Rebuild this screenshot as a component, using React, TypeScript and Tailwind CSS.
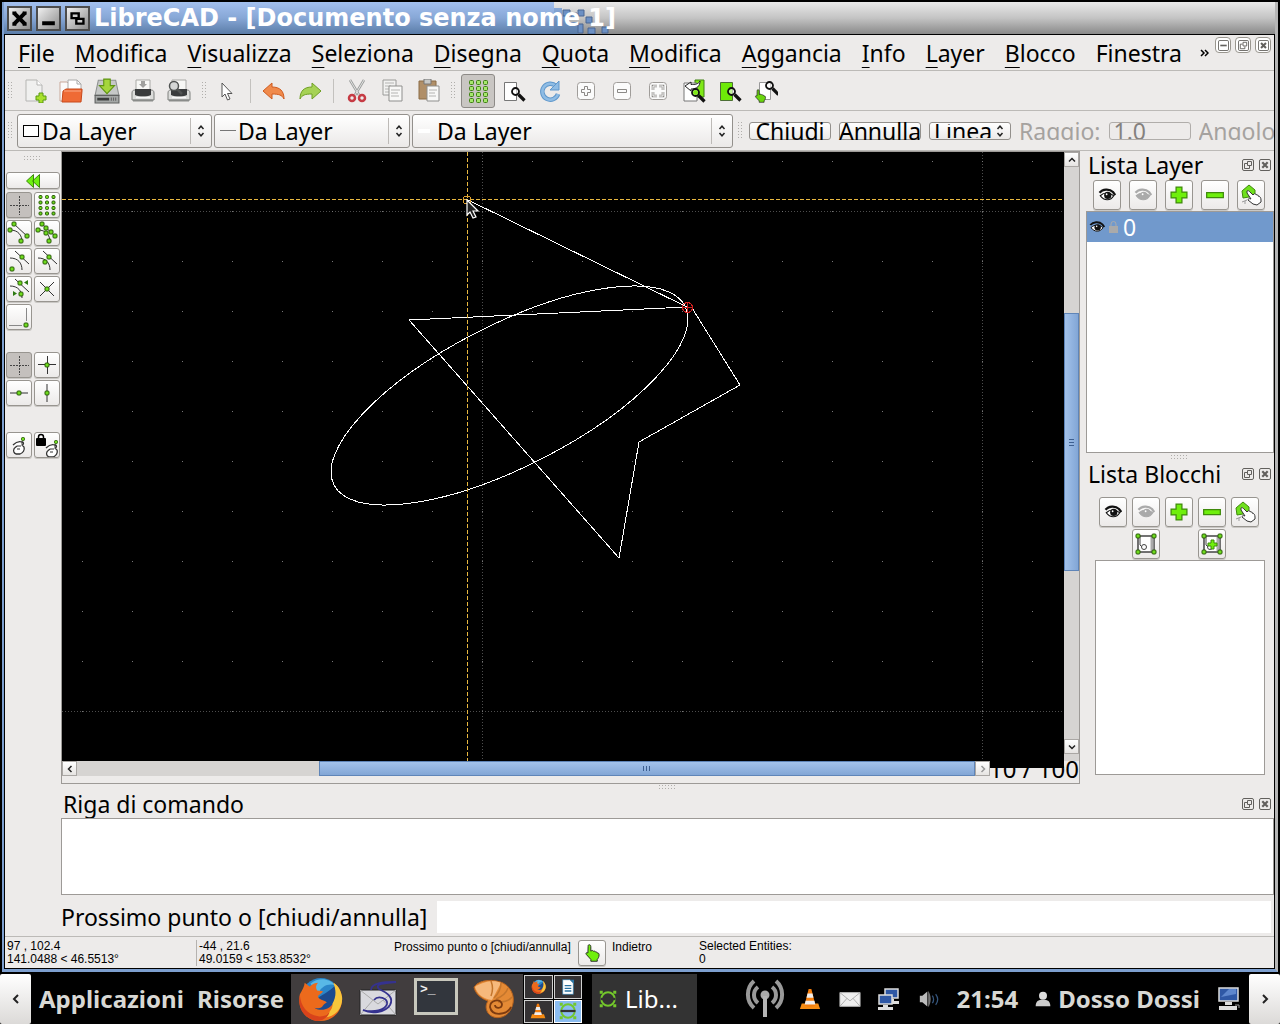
import type { ReactNode } from 'react';

const MENU = ['File', 'Modifica', 'Visualizza', 'Seleziona', 'Disegna', 'Quota', 'Modifica', 'Aggancia', 'Info', 'Layer', 'Blocco'];

const GREEN = '#6fdc1e';

/* ---------- small helpers ---------- */

function Icon({ size = 24, box = 24, children }: { size?: number; box?: number; children: ReactNode }) {
  return (
    <svg width={size} height={size} viewBox={`0 0 ${box} ${box}`} fill="none" className="shrink-0" aria-hidden="true">
      {children}
    </svg>
  );
}

function Handle({ className = '' }: { className?: string }) {
  return (
    <svg width="6" height="18" className={`shrink-0 ${className}`} aria-hidden="true">
      {[0, 3, 6, 9, 12, 15].map((y) => (
        <g key={y} fill="#b0aeab">
          <rect x="0" y={y} width="1" height="1" />
          <rect x="3" y={y} width="1" height="1" />
        </g>
      ))}
    </svg>
  );
}

function HandleFlat() {
  return (
    <svg width="18" height="5" className="mx-auto block shrink-0" aria-hidden="true">
      {[0, 3, 6, 9, 12, 15].map((x) => (
        <g key={x} fill="#b0aeab">
          <rect x={x} y="0" width="1" height="1" />
          <rect x={x} y="3" width="1" height="1" />
        </g>
      ))}
    </svg>
  );
}

function Dot({ x, y, r = 2 }: { x: number; y: number; r?: number }) {
  return <rect x={x - r} y={y - r} width={r * 2} height={r * 2} rx="1" fill={GREEN} stroke="#2b5a0a" />;
}

function ToolButton({ label, children }: { label: string; children: ReactNode }) {
  return (
    <button aria-label={label} className="flex h-9 w-9 shrink-0 items-center justify-center">
      {children}
    </button>
  );
}

function PadButton({ label, active = false, className = 'size-[26px]', children }: { label: string; active?: boolean; className?: string; children: ReactNode }) {
  return (
    <button
      aria-label={label}
      className={`flex shrink-0 items-center justify-center rounded-[3px] border border-[#989590] shadow-[0_1px_0_#c9c7c4] ${
        active ? 'bg-[#c4c0bd]' : 'bg-linear-to-b from-white to-[#eceae9]'
      } ${className}`}
    >
      {children}
    </button>
  );
}

function UpDown() {
  return (
    <svg width="8" height="12" viewBox="0 0 8 12" fill="none" stroke="#222" strokeWidth="1.5" className="shrink-0" aria-hidden="true">
      <path d="M1.5 4 4 1.2 6.5 4M1.5 8 4 10.8 6.5 8" />
    </svg>
  );
}

function Combo({ label, swatch, className }: { label: string; swatch: ReactNode; className: string }) {
  return (
    <div className={`flex h-[34px] shrink-0 items-center rounded-[3px] border border-[#93908c] bg-linear-to-b from-white to-[#ebe9e8] pl-[5px] ${className}`}>
      {swatch}
      <select aria-label={label} className="h-8 min-w-0 flex-1 appearance-none bg-transparent leading-8 outline-none">
        <option>Da Layer</option>
      </select>
      <span className="h-[26px] w-px bg-[#bdbab7]" />
      <span className="flex w-5 justify-center">
        <UpDown />
      </span>
    </div>
  );
}

function DockButton({ kind, size = 12 }: { kind: 'float' | 'close' | 'min'; size?: number }) {
  return (
    <button aria-label={kind} className="flex shrink-0 items-center justify-center">
      <svg width={size} height={size} viewBox="0 0 12 12" fill="none" stroke="#62605d" aria-hidden="true">
        <rect x="0.5" y="0.5" width="11" height="11" rx="1.5" />
        {kind === 'float' && <path d="M5.5 2.5h4v4h-4zM5 4.5H2.5v5h5V7" />}
        {kind === 'close' && <path d="m3.3 3.3 5.4 5.4m0-5.4L3.3 8.7" strokeWidth="2.2" />}
        {kind === 'min' && <path d="M2.5 6h7" strokeWidth="1.8" />}
      </svg>
    </button>
  );
}

function MdiButton({ kind }: { kind: 'float' | 'close' | 'min' }) {
  return (
    <span className="flex size-4 items-center justify-center rounded-[4px] border border-[#99968f] bg-white">
      <DockButton kind={kind} size={11} />
    </span>
  );
}

/* ---------- toolbar icons ---------- */

function Magnifier({ x, y }: { x: number; y: number }) {
  return (
    <g transform={`translate(${x} ${y})`}>
      <circle cx="4.5" cy="4.5" r="3.5" fill="#fff" fillOpacity="0.6" stroke="#111" strokeWidth="1.8" />
      <path d="m7.5 7.5 6 6" stroke="#111" strokeWidth="3.2" />
    </g>
  );
}

function Printer() {
  return (
    <g>
      <path d="M5 1h14v12H5z" fill="#f7f7f5" stroke="#a9a9a6" />
      <path d="M1 14c0-2 1-3 3-3h16c2 0 3 1 3 3v7H1z" fill="#dcdddb" stroke="#7f817f" />
      <path d="M4 10h16v6c-5 2-11 2-16 0z" fill="#3a3c3d" />
      <path d="M5 18.500h14" stroke="#f8f8f8" strokeWidth="1.500" />
      <path d="M2 21.500h20" stroke="#8a8c8a" strokeWidth="2" />
    </g>
  );
}

function Floppy() {
  return (
    <Icon size={26}>
      <path d="M4 2h16l3 14H1z" fill="#c6c8c7" stroke="#8d908f" />
      <path d="M1 16h22v7H1z" fill="#a4a7a6" stroke="#5e605f" />
      <path d="M3 19.500h11" stroke="#3c3e3d" strokeWidth="2.500" />
      <path d="M16 18v3M18 18v3M20 18v3" stroke="#666" />
      <path d="M9 1h6v6h4l-7 7.500L5 7h4z" fill="#a5d63c" stroke="#5f9412" />
    </Icon>
  );
}

function Hand({ x, y, fill = '#fff', s = 1 }: { x: number; y: number; fill?: string; s?: number }) {
  return (
    <path
      transform={`translate(${x} ${y}) scale(${s})`}
      d="M4 1c1.5 0 2 .8 2 2v5l1-.6c1-.4 1.6 0 2 .8 1-.5 1.8-.2 2.2.7 1-.3 1.8.3 2 1.2 1.200-.1 1.800.5 1.800 1.600 0 3-1 4-2 5.300v2H6v-2L1 11.500C0 10 1.500 9 2.800 10L3 3c0-1.200.2-2 1-2z"
      fill={fill}
      stroke="#222"
    />
  );
}

function SnapHand({ x, y }: { x: number; y: number }) {
  return (
    <g transform={`translate(${x} ${y})`}>
      <path d="M1 4c3-3 6-4 9-3 2 0 2 2 0 3l2 2c1 3-1 6-4 7H4c-2-1-3-3-2-5 0-1 2-2 3-3" fill="#fff" stroke="#333" strokeWidth="1.300" />
      <path d="M5 5h4M5 8h3M10 3V0" stroke="#333" />
      <Dot x={11} y={-2} r={1.5} />
    </g>
  );
}

function FileToolbar() {
  return (
    <div className="flex h-10 items-center overflow-hidden border-b border-[#bcbab7]" role="toolbar">
      <div className="flex w-3 shrink-0 justify-center"><Handle /></div>
      <ToolButton label="Nuovo">
        <Icon>
          <path d="M3 1h11l5 5v16H3z" fill="#f0f0ef" stroke="#b5b5b3" />
          <path d="M14 1v5h5" fill="#fff" stroke="#b5b5b3" />
          <path d="M16 14h4v3h3v4h-3v3h-4v-3h-3v-4h3z" fill="#a8e02c" stroke="#5a9a10" />
        </Icon>
      </ToolButton>
      <ToolButton label="Apri">
        <Icon>
          <path d="M1 3h7l2 2v17H1z" fill="#fafafa" stroke="#c9a89b" />
          <path d="M9 1h9l4 4v8H9z" fill="#fff" stroke="#aaa" />
          <path d="M18 1v4h4" stroke="#aaa" />
          <path d="M4 12l3-2h16v2l-1 11H3z" fill="#ef6a35" stroke="#c8481b" />
          <path d="M5 12h17" stroke="#f9a988" />
        </Icon>
      </ToolButton>
      <ToolButton label="Salva"><Floppy /></ToolButton>
      <ToolButton label="Stampa">
        <Icon>
          <Printer />
          <path d="M10 2h4v3h2l-4 4-4-4h2z" fill="#a0a09e" />
        </Icon>
      </ToolButton>
      <ToolButton label="Anteprima">
        <Icon>
          <Printer />
          <circle cx="7" cy="7" r="4.500" fill="#d4d6d5" stroke="#505352" strokeWidth="1.500" />
          <path d="m10 10 5 5" stroke="#505352" strokeWidth="2.500" />
        </Icon>
      </ToolButton>
      <div className="flex w-[11px] shrink-0 justify-end"><Handle /></div>
      <ToolButton label="Selezione">
        <Icon>
          <path d="M8 4v14l3-3 2.500 6 2.500-1-2.500-5.500H18z" fill="#fff" stroke="#555" />
        </Icon>
      </ToolButton>
      <div className="flex w-3 shrink-0 justify-center"><span className="h-6 w-px bg-[#c3c1be]" /></div>
      <ToolButton label="Annulla modifica">
        <Icon>
          <path d="M1 12 10 4v4c8 0 12 4 12 12-2-4-5-5-12-5v5z" fill="#f08a4c" stroke="#cf5b1f" strokeLinejoin="round" />
        </Icon>
      </ToolButton>
      <ToolButton label="Ripeti">
        <Icon>
          <path d="M23 12 14 4v4C6 8 2 12 2 20c2-4 5-5 12-5v5z" fill="#a6d255" stroke="#6f9f25" strokeLinejoin="round" />
        </Icon>
      </ToolButton>
      <div className="flex w-[11px] shrink-0 justify-center"><span className="h-6 w-px bg-[#c3c1be]" /></div>
      <ToolButton label="Taglia">
        <Icon>
          <path d="M5 1l9 15M19 1l-9 15" stroke="#9b9d9c" strokeWidth="2.500" />
          <path d="M5 1l9 15M19 1l-9 15" stroke="#e2e3e2" />
          <circle cx="7" cy="19" r="3" stroke="#c63b44" strokeWidth="2.500" />
          <circle cx="17" cy="19" r="3" stroke="#c63b44" strokeWidth="2.500" />
        </Icon>
      </ToolButton>
      <ToolButton label="Copia">
        <Icon>
          <path d="M2 1h13v15H2z" fill="#f2f2f1" stroke="#9a9a98" />
          <path d="M4 4h9M4 7h6M4 10h4M4 13h4" stroke="#b4b4b2" />
          <path d="M8 7h13v15H8z" fill="#f8f8f7" stroke="#8f8f8d" />
          <path d="M10 11h9M10 14h7M10 17h8" stroke="#b4b4b2" />
        </Icon>
      </ToolButton>
      <ToolButton label="Incolla">
        <Icon>
          <path d="M2 2h17v18H2z" fill="#b08f68" stroke="#8b6c47" />
          <path d="M7 0h7v5H7z" fill="#c7c8c6" stroke="#777" />
          <path d="M10 7h12v15H10z" fill="#f8f8f7" stroke="#8f8f8d" />
          <path d="M12 11h8M12 14h6M12 17h7" stroke="#b4b4b2" />
        </Icon>
      </ToolButton>
      <div className="flex w-[13px] shrink-0 justify-center"><Handle /></div>
      <button aria-label="Griglia" className="mx-px flex size-[34px] shrink-0 items-center justify-center rounded-[3px] border border-[#8d8a87] bg-[#c9c6c3]">
        <Icon>
          {[4, 11, 18].map((x) => [3, 9, 15, 21].map((y) => <rect key={`${x}-${y}`} x={x - 0.5} y={y - 1.5} width="4" height="4" rx="1" fill="#a5e86c" stroke="#3f8013" />))}
        </Icon>
      </button>
      <ToolButton label="Ridisegna">
        <Icon>
          <path d="M2.500 3.500h12v18h-12z" fill="#fff" stroke="#777" />
          <Magnifier x={9} y={8} />
        </Icon>
      </ToolButton>
      <ToolButton label="Aggiorna">
        <Icon>
          <path d="M18 7A8 8 0 1 0 20 15" stroke="#5f97cb" strokeWidth="4.500" />
          <path d="M18 7A8 8 0 1 0 20 15" stroke="#8fbce4" strokeWidth="2.500" />
          <path d="M21 2v9h-9z" fill="#8fbce4" stroke="#5f97cb" />
        </Icon>
      </ToolButton>
      <ToolButton label="Ingrandisci">
        <Icon>
          <rect x="3.500" y="3.500" width="17" height="17" rx="3" fill="#fbfbfb" stroke="#a09d9a" />
          <path d="M10.500 7.500h3v3h3v3h-3v3h-3v-3h-3v-3h3z" stroke="#8b8986" />
        </Icon>
      </ToolButton>
      <ToolButton label="Riduci">
        <Icon>
          <rect x="3.500" y="3.500" width="17" height="17" rx="3" fill="#fbfbfb" stroke="#a09d9a" />
          <path d="M7.500 10.500h9v3h-9z" stroke="#8b8986" />
        </Icon>
      </ToolButton>
      <ToolButton label="Zoom automatico">
        <Icon>
          <rect x="3.500" y="3.500" width="17" height="17" rx="3" fill="#fbfbfb" stroke="#a09d9a" />
          <path d="M7 11V7h4M13 7h4v4M17 13v4h-4M11 17H7v-4" stroke="#8b8986" strokeWidth="2.600" />
          <path d="M7 11V7h4M13 7h4v4M17 13v4h-4M11 17H7v-4" stroke="#fff" />
        </Icon>
      </ToolButton>
      <ToolButton label="Vista precedente">
        <Icon>
          <path d="M13 1h9v17h-9z" fill="#7fe817" stroke="#3f8013" />
          <path d="M2 4h13v18H2z" fill="#fff" stroke="#777" />
          <path d="M3 7 9 3v2.500c4 0 7 0 9-3.500 0 5-3 8-9 8V12z" fill="#fff" stroke="#222" />
          <Magnifier x={9} y={9} />
          <circle cx="13.500" cy="13.500" r="2.500" fill="#7fe817" />
        </Icon>
      </ToolButton>
      <ToolButton label="Zoom finestra">
        <Icon>
          <path d="M2.500 3.500h12v18h-12z" fill="#6eea08" stroke="#4c6e35" />
          <Magnifier x={9} y={8} />
        </Icon>
      </ToolButton>
      <ToolButton label="Panoramica">
        <Icon>
          <path d="M5.500 3.500h11v17h-11z" fill="#fff" stroke="#999" />
          <Magnifier x={11} y={2} />
          <Hand x={1} y={10} s={0.7} fill="#6ad50e" />
        </Icon>
      </ToolButton>
    </div>
  );
}

function PropertyToolbar() {
  return (
    <div className="flex h-10 items-center overflow-hidden border-b border-[#bcbab7]" role="toolbar">
      <div className="flex w-3 shrink-0 justify-center"><Handle /></div>
      <Combo label="Colore" className="w-[195px]" swatch={<span className="mr-[3px] h-3 w-4 border border-black bg-white" />} />
      <Combo label="Spessore" className="ml-[2px] w-[196px]" swatch={<span className="mr-[2px] h-px w-4 bg-[#777]" />} />
      <Combo label="Tipo di linea" className="ml-[2px] w-[321px]" swatch={<span className="mr-[7px] h-1 w-3 bg-white" />} />
      <div className="flex w-4 shrink-0 justify-center"><Handle /></div>
      <div className="flex min-w-0 items-center gap-2">
        <button className="flex h-[18px] w-[82px] shrink-0 items-center justify-center rounded-[3px] border border-[#93908c] bg-linear-to-b from-white to-[#ebe9e8] leading-[16px]">Chiudi</button>
        <button className="flex h-[18px] w-[82px] shrink-0 items-center justify-center rounded-[3px] border border-[#93908c] bg-linear-to-b from-white to-[#ebe9e8] leading-[16px]">Annulla</button>
        <div className="flex h-[18px] w-[82px] shrink-0 items-center rounded-[3px] border border-[#93908c] bg-linear-to-b from-white to-[#ebe9e8] py-px pr-[6px] pl-1">
          <select aria-label="Tipo" className="h-[14px] min-w-0 flex-1 appearance-none overflow-hidden bg-transparent leading-[14px] outline-none">
            <option>Linea</option>
          </select>
          <UpDown />
        </div>
        <label htmlFor="raggio" className="h-[18px] shrink-0 overflow-hidden leading-[18px] text-[#a5a29f]">Raggio:</label>
        <input id="raggio" disabled defaultValue="1.0" className="h-[18px] w-[82px] shrink-0 rounded-[3px] border border-[#b0adaa] bg-[#edebea] pl-1 text-[#84817e]" />
        <span className="h-[18px] overflow-hidden leading-[18px] text-[#a5a29f]">Angolo</span>
      </div>
    </div>
  );
}

/* ---------- left palette ---------- */

const line = { stroke: '#333', strokeWidth: 1 };

function Palette() {
  return (
    <div className="flex w-14 shrink-0 flex-col px-px pt-[5px]">
      <HandleFlat />
      <PadButton label="Indietro" className="mt-[11px] h-[17px] w-[54px]">
        <svg width="16" height="14" aria-hidden="true">
          <path d="M8.500.5v13L1.500 7zM14.500.5v13L7.500 7z" fill="#6ff011" stroke="#3b8a0a" />
        </svg>
      </PadButton>
      <div className="mt-[3px] grid grid-cols-[26px_26px] gap-[2px]">
        <PadButton label="Snap libero" active>
          <Icon><path d="M12.500 3v19M3 12.500h19" stroke="#444" strokeDasharray="2 1" /></Icon>
        </PadButton>
        <PadButton label="Snap griglia">
          <Icon>{[5.5, 12, 18.5].map((x) => [4, 9.5, 15, 20.5].map((y) => <Dot key={`${x}-${y}`} x={x} y={y} r={1.5} />))}</Icon>
        </PadButton>
        <PadButton label="Snap estremi">
          <Icon><path d="M7 3l14 13M3 9c8 0 12 5 12 12" {...line} /><Dot x={7} y={3} /><Dot x={20} y={15} /><Dot x={3} y={9} /><Dot x={14} y={20} /></Icon>
        </PadButton>
        <PadButton label="Snap entità">
          <Icon><path d="M7 3l14 13M3 9c8 0 12 5 12 12" {...line} /><Dot x={7} y={3} /><Dot x={20} y={15} /><Dot x={3} y={9} /><Dot x={14} y={20} /><Dot x={11} y={7} /><Dot x={16} y={11} /><Dot x={11} y={12} /></Icon>
        </PadButton>
        <PadButton label="Snap centro">
          <Icon><path d="M8 2l14 13M3 9c8 0 12 5 12 12" {...line} /><Dot x={15} y={8} /><Dot x={5} y={20} /></Icon>
        </PadButton>
        <PadButton label="Snap medio">
          <Icon><path d="M8 2l14 13M3 9c8 0 12 5 12 12" {...line} /><Dot x={14} y={8} /><Dot x={10} y={13} /></Icon>
        </PadButton>
        <PadButton label="Snap distanza">
          <Icon><path d="M8 2l14 13M3 9c8 0 12 5 12 12" {...line} /><Dot x={13} y={6} /><Dot x={14} y={17} /><path d="M21 3v5l-4-2.500zM6 14v5l4-2.500z" fill="#2d7a12" /></Icon>
        </PadButton>
        <PadButton label="Snap intersezione">
          <Icon><path d="M5 5l14 14M19 5L5 19" {...line} /><Dot x={12} y={12} /></Icon>
        </PadButton>
        <PadButton label="Snap angolo">
          <Icon><path d="M19.500 3v13M2 20.500h13" stroke="#888" /><Dot x={19} y={20} /></Icon>
        </PadButton>
      </div>
      <div className="mt-[22px] grid grid-cols-[26px_26px] gap-[2px]">
        <PadButton label="Nessuna restrizione" active>
          <Icon><path d="M12.500 3v19M3 12.500h19" stroke="#444" strokeDasharray="2 1" /></Icon>
        </PadButton>
        <PadButton label="Restrizione ortogonale">
          <Icon><path d="M12.500 3v18M3 11.500h18" {...line} /><Dot x={12} y={12} /></Icon>
        </PadButton>
        <PadButton label="Restrizione orizzontale">
          <Icon><path d="M3 12h18" {...line} /><Dot x={12} y={12} /></Icon>
        </PadButton>
        <PadButton label="Restrizione verticale">
          <Icon><path d="M12 3v18" {...line} /><Dot x={12} y={12} /></Icon>
        </PadButton>
      </div>
      <div className="mt-[26px] grid grid-cols-[26px_26px] gap-[2px]">
        <PadButton label="Zero relativo">
          <Icon><SnapHand x={5} y={8} /></Icon>
        </PadButton>
        <PadButton label="Blocca zero relativo">
          <Icon>
            <SnapHand x={10} y={11} />
            <rect x="1" y="5" width="10" height="8" rx="1" fill="#000" />
            <path d="M3.500 6V4a2.500 2.500 0 0 1 5 0v2" stroke="#000" strokeWidth="1.500" />
          </Icon>
        </PadButton>
      </div>
    </div>
  );
}

/* ---------- drawing view ---------- */

function Drawing() {
  return (
    <svg width="100%" height="100%" className="absolute inset-0" shapeRendering="crispEdges" aria-label="Disegno">
      <defs>
        <pattern id="dots" x="20" y="9" width="50" height="50" patternUnits="userSpaceOnUse">
          <rect width="1" height="1" fill="#777" />
        </pattern>
      </defs>
      <rect width="100%" height="100%" fill="#000" />
      <g stroke="#4d4d4d" strokeDasharray="1 2">
        <path d="M420.500 0v2000M920.500 0v2000M0 59.500h3000M0 559.500h3000" />
      </g>
      <rect width="100%" height="100%" fill="url(#dots)" />
      <g stroke="#fff" fill="none">
        <ellipse cx="447.500" cy="243.500" rx="197" ry="71" transform="rotate(-27 447.500 243.500)" />
        <path d="M406 48 625 155 347 168 557 406 577 290 678 233 630 156" />
      </g>
      <g stroke="#e8b840" strokeDasharray="4 2" fill="none">
        <path d="M405.500 0v2000M0 47.500h3000" />
      </g>
      <circle cx="405" cy="48" r="4" stroke="#dfa030" fill="none" />
      <g stroke="#d02020" fill="none">
        <circle cx="625.500" cy="155.500" r="5" />
        <path d="M620 155.500h11M625.500 150v11" />
      </g>
      <path d="M405 48v15l3-3 3 6 3-1-3-6h5z" fill="#222" stroke="#fff" strokeWidth="1.200" shapeRendering="auto" />
    </svg>
  );
}

function Arrow({ d, dim = false }: { d: string; dim?: boolean }) {
  return (
    <button aria-label="Scorri" className="flex size-[15px] shrink-0 items-center justify-center border border-[#aaa7a4] bg-linear-to-b from-white to-[#e6e4e2]">
      <svg width="8" height="8" fill="none" stroke={dim ? '#999' : '#222'} strokeWidth="1.500" aria-hidden="true"><path d={d} /></svg>
    </button>
  );
}

function CanvasPane() {
  return (
    <div className="flex min-w-0 flex-1 flex-col border border-[#9d9a97]">
      <div className="flex min-h-0 flex-1">
        <div className="relative flex-1 bg-black">
          <Drawing />
        </div>
        <div className="flex w-[15px] flex-col bg-[#d6d4d2] pb-[7px]">
          <Arrow d="M1 5.500 4 2.500l3 3" />
          <div className="grow-[148]" />
          <div className="flex grow-[253] flex-col items-center justify-center gap-[2px] border border-[#5f85b8] bg-linear-to-r from-[#a3c2ea] to-[#82a6d6]">
            {[0, 1, 2].map((i) => <span key={i} className="h-px w-[5px] bg-[#3d5f90]" />)}
          </div>
          <div className="grow-[170]" />
          <Arrow d="M1 2.500 4 5.500l3-3" />
        </div>
      </div>
      <div className="flex h-[22px]">
        <div className="flex h-[15px] min-w-0 flex-1 bg-[#d6d4d2]">
          <Arrow d="M5.500 1 2.500 4l3 3" />
          <div className="grow-[244]" />
          <div className="flex grow-[654] items-center justify-center gap-[2px] border border-[#5f85b8] bg-linear-to-b from-[#a3c2ea] to-[#82a6d6]">
            {[0, 1, 2].map((i) => <span key={i} className="h-[5px] w-px bg-[#3d5f90]" />)}
          </div>
          <Arrow dim d="M2.500 1 5.500 4l-3 3" />
        </div>
        <div className="relative flex h-[22px] w-[89px] items-center justify-end overflow-hidden pb-[6px] text-[24px] leading-[22px] whitespace-nowrap">
          10 / 100
          <span className="absolute top-0 left-0 h-[7px] w-[74px] bg-black" />
        </div>
      </div>
    </div>
  );
}

/* ---------- right docks ---------- */

function Eye({ fill = '#111', size = 18 }: { fill?: string; size?: number }) {
  return (
    <Icon size={size}>
      <path d="M2 9c4-5 13-6 18-1l3 4" stroke={fill} strokeWidth="3" />
      <path d="M3 13c5-5 12-5 18 0-4 7-13 7-18 0z" fill={fill === '#111' ? '#fff' : fill} stroke={fill} strokeWidth="1.500" />
      <circle cx="13" cy="12.500" r="4.800" fill={fill} />
      <circle cx="11.500" cy="11" r="1.200" fill="#fff" />
    </Icon>
  );
}

function Plus() {
  return <Icon size={20}><path d="M8.500 2.500h7v6h6v7h-6v6h-7v-6h-6v-7h6z" fill="#6fef0c" stroke="#3f8a0b" strokeWidth="1.500" /></Icon>;
}

function Minus() {
  return <Icon size={20}><path d="M2 9h20v6H2z" fill="#6fef0c" stroke="#3f8a0b" strokeWidth="1.500" /></Icon>;
}

function EditHand() {
  return (
    <Icon>
      <path d="M3 8 10 2l6 5v6L4 15z" fill="#6fe01c" stroke="#3f8a0b" />
      <path d="M8 8c1-1 2 0 3 1l3 3 1-1c1-1 2 0 2 1 1-1 2 0 2 1 2 0 3 2 3 4v2l-4 3-4-1-5-4c0-1 1-2 3-1l-4-6z" fill="#fff" stroke="#333" />
      <path d="M3 19l5-2M6 21v-3" stroke="#999" />
    </Icon>
  );
}

function BlockIcon({ plus = false }: { plus?: boolean }) {
  return (
    <Icon>
      <path d="M4 4h16v16H4z" fill="#fff" stroke="#444" strokeWidth="1.500" />
      <path d="M18 5v14" stroke="#aaa" strokeWidth="3" />
      <path d="M6 4v9l4 4" stroke="#444" />
      <circle cx="10" cy="15" r="2.500" fill="#fff" stroke="#444" />
      {plus && <path d="M11 8h3v3h3v3h-3v3h-3v-3H8v-3h3z" fill="#6fef0c" stroke="#3f8a0b" />}
      <Dot x={4} y={4} /><Dot x={20} y={4} /><Dot x={4} y={20} /><Dot x={20} y={20} />
    </Icon>
  );
}

function DockTitle({ children }: { children: ReactNode }) {
  return (
    <div className="flex h-[28px] shrink-0 items-center gap-[5px] pr-[3px] pl-[2px]">
      <h2 className="flex-1">{children}</h2>
      <DockButton kind="float" />
      <DockButton kind="close" />
    </div>
  );
}

function DockTools({ name }: { name: string }) {
  return (
    <>
      <PadButton label={`Mostra ${name}`} className="h-[30px] w-7"><Eye /></PadButton>
      <PadButton label={`Nascondi ${name}`} className="h-[30px] w-7"><Eye fill="#aaa" /></PadButton>
      <PadButton label={`Aggiungi ${name}`} className="h-[30px] w-7"><Plus /></PadButton>
      <PadButton label={`Rimuovi ${name}`} className="h-[30px] w-7"><Minus /></PadButton>
      <PadButton label={`Modifica ${name}`} className="h-[30px] w-7"><EditHand /></PadButton>
    </>
  );
}

function Docks() {
  return (
    <aside className="flex w-[194px] shrink-0 flex-col pl-[6px]">
      <DockTitle>Lista Layer</DockTitle>
      <div className="flex gap-2 pt-px pb-px pl-[7px]"><DockTools name="layer" /></div>
      <div className="h-[242px] border border-[#9d9a97] bg-white">
        <div className="flex h-[30px] items-center bg-[#7199cc] pl-[2px] text-white">
          <Eye size={16} />
          <svg width="10" height="12" className="ml-1" aria-hidden="true">
            <rect x="0" y="5" width="9" height="7" fill="#aaa" />
            <path d="M2 5V3a2.500 2.500 0 0 1 5 0v2" fill="none" stroke="#aaa" />
          </svg>
          <span className="ml-1">0</span>
        </div>
      </div>
      <div className="pt-[2px]"><HandleFlat /></div>
      <DockTitle>Lista Blocchi</DockTitle>
      <div className="mt-[9px] grid grid-cols-[repeat(5,28px)] justify-center gap-x-[5px] gap-y-[2px] pr-[2px]">
        <DockTools name="blocco" />
        <PadButton label="Modifica attributi blocco" className="col-start-2 h-[30px] w-7"><BlockIcon /></PadButton>
        <PadButton label="Inserisci blocco" className="col-start-4 h-[30px] w-7"><BlockIcon plus /></PadButton>
      </div>
      <div className="mt-px mr-[9px] mb-[9px] ml-[9px] flex-1 border border-[#9d9a97] bg-white" />
    </aside>
  );
}

/* ---------- window chrome ---------- */

function TitleButton({ label, children }: { label: string; children: ReactNode }) {
  return (
    <button aria-label={label} className="relative flex size-[25px] items-center justify-center border-2 border-[#4c4c4c] bg-linear-to-br from-[#f0f0f0] to-[#8e8e8e]">
      <Icon size={19}>{children}</Icon>
    </button>
  );
}

function TitleBar() {
  return (
    <header className="relative flex h-8 shrink-0 items-center gap-1 bg-linear-to-b from-[#e9e9e9] via-[#c4c4c4] to-[#8a8a8a] pl-[3px]">
      <div className="absolute inset-y-0 left-0 flex">
        <div className="w-[550px] bg-linear-to-b from-[#a3c0ee] via-[#87a7d6] to-[#5b7da8]" />
        <svg width="64" height="32" aria-hidden="true">
          <defs>
            <linearGradient id="edge" x1="0" y1="0" x2="0" y2="1">
              <stop offset="0" stopColor="#87a7d6" />
              <stop offset="1" stopColor="#5b7da8" />
            </linearGradient>
          </defs>
          <path d="M0 6h8v8h8v6h8v12H0z" fill="url(#edge)" />
          <g fill="#6c90c4" stroke="#4a6692">
            <path d="M9 8h7v6H9zM17 11h6v5h-6zM24 8h6v6h-6zM24 22h5v9h-5zM32 15h6v6h-6zM34 26h7v6h-7zM48 25h6v6h-6z" />
          </g>
        </svg>
      </div>
      <TitleButton label="Chiudi finestra">
        <path d="m5 5 14 14M19 5 5 19" stroke="#000" strokeWidth="5" />
        <path d="M3 3h5v4H3zM16 3h5v4h-5zM3 17h5v4H3zM16 17h5v4h-5z" fill="#000" />
      </TitleButton>
      <TitleButton label="Riduci a icona"><path d="M4 18h16" stroke="#000" strokeWidth="5" /></TitleButton>
      <TitleButton label="Ripristina"><path d="M4.500 5.500h9v6h-9zM10.500 12.500h9v6h-9z" fill="#ccc" stroke="#000" strokeWidth="3" /></TitleButton>
      <h1 className="relative font-['DejaVu_Sans',sans-serif] text-[24px] leading-[28px] font-bold whitespace-nowrap text-white">
        LibreCAD - [Documento senza nome 1]
      </h1>
    </header>
  );
}

function MenuBar() {
  return (
    <nav className="flex h-9 items-center overflow-hidden border-b border-[#bcbab7] pr-[3px] pl-[13px]">
      <div className="flex min-w-0 flex-1 gap-[20px] whitespace-nowrap">
        {MENU.map((m, i) => (
          <button key={i}>
            <span className="underline decoration-1 underline-offset-[5px]">{m[0]}</span>
            {m.slice(1)}
          </button>
        ))}
        <button>Finestra</button>
      </div>
      <button aria-label="Altro" className="mx-[6px]">
        <svg width="9" height="8" fill="none" stroke="#000" strokeWidth="1.500" aria-hidden="true"><path d="m1 1 3 3-3 3m4-6 3 3-3 3" /></svg>
      </button>
      <div className="mb-[15px] flex gap-1">
        <MdiButton kind="min" />
        <MdiButton kind="float" />
        <MdiButton kind="close" />
      </div>
    </nav>
  );
}

function StatusBar() {
  return (
    <footer className="flex h-8 shrink-0 items-start border-t border-[#bcbab7] pt-[3px] font-['Liberation_Sans',sans-serif] text-[12px] leading-[13px] whitespace-nowrap">
      <p className="w-[191px] pl-[2px]">97 , 102.4<br />141.0488 &lt; 46.5513°</p>
      <p className="w-[189px] border-l border-[#b5b2af] pl-[2px]">-44 , 21.6<br />49.0159 &lt; 153.8532°</p>
      <p className="w-[193px] pt-px pl-[9px]">Prossimo punto o [chiudi/annulla]</p>
      <PadButton label="Mouse" className="h-[26px] w-7"><Icon size={20}><Hand x={4} y={1} s={1.1} fill="#6fef0c" /></Icon></PadButton>
      <p className="w-[93px] pt-px pl-[6px]">Indietro</p>
      <p>Selected Entities:<br />0</p>
    </footer>
  );
}

/* ---------- desktop panel ---------- */

function Firefox({ size }: { size: number }) {
  return (
    <Icon size={size} box={48}>
      <circle cx="25" cy="22" r="20" fill="#2a85c8" />
      <path d="M14 8c8-7 20-6 26 2-6-3-16 1-17 8z" fill="#58b8e6" />
      <path d="M20 24c6-4 14-8 20-14 7 6 9 18 3 26-5 8-18 12-27 7z" fill="#1c4b8f" />
      <path d="M38 7c4 8 4 14 0 21-4 8-14 9-20 5 10 3 8-4 13-5-1-3-7-2-9-6 0-3 4-3 5-6l-6-1c-2-3-1-6 1-8-5 0-7 3-9 4l-5-4c0 4-3 8-5 12C0 33 8 47 24 47s24-13 23-25C46 15 43 10 38 7z" fill="#ec6a1c" />
      <path d="M38 7c3 8 3 15-1 22 1 4-4 12-11 14 15 1 22-11 21-21C46 15 43 10 38 7z" fill="#f8c63b" />
      <path d="M3 20c1 11 7 20 19 22 6 1 10-2 12-5-1 6-7 10-14 10C8 44 0 34 3 20z" fill="#d8431b" />
    </Icon>
  );
}

function Cone({ size }: { size: number }) {
  return (
    <Icon size={size}>
      <path d="M3 17h18l2 6H1z" fill="#f58b12" />
      <path d="M10.500 1h3l4.500 18c-4 2-8 2-12 0z" fill="#f47d0d" />
      <path d="M9.300 6h5.400l1.100 4.500H8.200zM7.200 14h9.600l1 4H6.200z" fill="#eee" />
    </Icon>
  );
}

function CadLogo({ size }: { size: number }) {
  return (
    <Icon size={size}>
      <circle cx="12" cy="12" r="9" stroke="#74c82c" strokeWidth="2.500" />
      <path d="M2 12h20" stroke="#333" strokeWidth="3" />
      <path d="M1 1h4v4H1zM19 1h4v4h-4zM1 19h4v4H1zM19 19h4v4h-4z" fill="#74c82c" />
    </Icon>
  );
}

function Computer({ x = 0, y = 0 }: { x?: number; y?: number }) {
  return (
    <g transform={`translate(${x} ${y})`}>
      <path d="M1 1h13v9H1z" fill="#2f58a5" stroke="#ddd" strokeWidth="1.500" />
      <path d="M5 11h5v2H5zM0 13h15v3H0z" fill="#ddd" />
    </g>
  );
}

function PanelEnd({ label, d }: { label: string; d: string }) {
  return (
    <button aria-label={label} className="flex w-[31px] shrink-0 items-center justify-center rounded-[2px] bg-linear-to-b from-white to-[#dcdad8]">
      <svg width="8" height="12" fill="none" stroke="#222" strokeWidth="2" aria-hidden="true"><path d={d} /></svg>
    </button>
  );
}

function Panel() {
  return (
    <div className="flex h-[50px] shrink-0 items-stretch overflow-hidden bg-black text-[24px] text-[#d8d8d4]">
      <PanelEnd label="Nascondi a sinistra" d="M6 2 2 6l4 4" />
      <button className="ml-2 w-[142px] text-left font-bold whitespace-nowrap">Applicazioni</button>
      <button className="ml-4 w-[94px] text-left font-bold">Risorse</button>
      <div className="flex w-[232px] bg-[#413d3e]">
        <button aria-label="Firefox" className="flex flex-1 items-center justify-center"><Firefox size={46} /></button>
        <button aria-label="Posta" className="flex flex-1 items-center justify-center">
          <Icon size={40} box={40}>
            <path d="M2 11h36v25H2z" fill="#d9d9de" stroke="#222" />
            <path d="m2 11 18 14 18-14M2 36l13-15M38 36 25 21" stroke="#aaa" />
            <path d="M13 11c0-7 12-8 25-8-12 1-22 2-17 7 9 4 15 9 11 16-5 8-19 9-27 5 11 3 22 0 24-6 1-6-9-9-13-4" stroke="#35328f" strokeWidth="1.800" />
          </Icon>
        </button>
        <button aria-label="Terminale" className="flex flex-1 items-center justify-center pb-1">
          <svg width="44" height="38" aria-hidden="true">
            <rect x="1.500" y="1.500" width="41" height="34" fill="#32363d" stroke="#c8c8bd" strokeWidth="3" />
            <text x="6" y="15" fill="#eee" fontSize="13" fontWeight="bold" fontFamily="Liberation Mono, monospace">&gt;_</text>
          </svg>
        </button>
        <button aria-label="Shell" className="flex flex-1 items-center justify-center">
          <Icon size={44} box={44}>
            <path d="M2 10C8 2 22 2 31 6c10 5 13 17 8 26-4 9-17 12-23 4-3-5-2-9 0-12C10 22 3 17 2 10z" fill="#e48a35" stroke="#b3601d" />
            <path d="M3 10c8-6 21-7 26-4l-9 17c-9-1-15-6-17-13z" fill="#f6b97c" />
            <path d="M19 4c2 5 2 10 0 15M29 6c0 6-3 11-7 15M36 11c-2 6-7 9-12 11M40 20c-3 4-8 5-14 5" stroke="#c4762c" strokeWidth="1.500" />
            <path d="M39 30c-4 8-19 10-21 0 0-7 10-9 12-3 0 5-7 5-7 1" stroke="#7c3b10" strokeWidth="1.800" />
          </Icon>
        </button>
      </div>
      <div className="grid w-[60px] grid-cols-2 grid-rows-2 gap-px bg-black p-px">
        <button aria-label="Area 1" className="flex items-center justify-center border border-[#d0d0d0] bg-[#353234]"><Firefox size={15} /></button>
        <button aria-label="Area 2" className="flex items-center justify-center border border-[#d0d0d0] bg-[#353234]">
          <Icon size={16}><path d="M4 1h11l5 5v17H4z" fill="#fff" stroke="#2d78a8" /><path d="M15 1h6v6z" fill="#2d78a8" /><path d="M7 10h10M7 14h10M7 18h10" stroke="#2670a0" strokeWidth="2" /></Icon>
        </button>
        <button aria-label="Area 3" className="flex items-center justify-center border border-[#d0d0d0] bg-[#353234]"><Cone size={16} /></button>
        <button aria-label="Area 4" className="flex items-center justify-center border border-white bg-[#8bbcf0]"><CadLogo size={18} /></button>
      </div>
      <button className="ml-[9px] flex w-[105px] items-center gap-2 bg-[#333] pl-[7px] text-white"><CadLogo size={18} />Lib...</button>
      <div className="flex flex-1 items-center justify-end">
        <button aria-label="Rete wireless">
          <Icon size={42} box={42}>
            <circle cx="21" cy="17" r="4.500" fill="#aaa" />
            <path d="M21 18v21" stroke="#b5b5b5" strokeWidth="4" />
            <path d="M14 25a10 10 0 0 1 0-16M28 25a10 10 0 0 0 0-16M10 30a18 18 0 0 1 0-27M32 30a18 18 0 0 0 0-27" stroke="#999" strokeWidth="4" />
          </Icon>
        </button>
        <button aria-label="VLC" className="ml-[13px]"><Cone size={22} /></button>
        <button aria-label="Messaggi" className="ml-[18px]">
          <Icon size={22}><path d="M1 5h22v15H1z" fill="#eee" stroke="#bbb" /><path d="m1 5 11 9 11-9M1 20l8-9M23 20l-8-9" stroke="#aaa" /></Icon>
        </button>
        <button aria-label="Rete" className="ml-4"><Icon><Computer x={7} y={1} /><Computer x={1} y={7} /></Icon></button>
        <button aria-label="Volume" className="ml-[18px]">
          <Icon size={20}><path d="M1 8h3l6-5v18l-6-5H1z" fill="#bbb" /><path d="M11 2c4 6 4 14 0 20z" fill="#777" /><path d="M16 8c2 3 2 6 0 9M20 6c3 4 3 9 0 13" stroke="#35567e" strokeWidth="1.500" /></Icon>
        </button>
        <button className="ml-[18px] font-bold">21:54</button>
        <button className="ml-[17px] flex items-center gap-[7px] font-bold whitespace-nowrap">
          <Icon size={16}><circle cx="12" cy="7" r="6" fill="#ddd" /><path d="M1 23c0-8 4-10 11-10s11 2 11 10z" fill="#ccc" /></Icon>
          Dosso Dossi
        </button>
        <button aria-label="Sessione" className="mr-2 ml-[17px]">
          <Icon><path d="M2 1h19v13H2z" fill="#2f58a5" stroke="#ddd" strokeWidth="1.500" /><path d="M4 10 12 2h7v5z" fill="#5e87cd" /><path d="M8 15h7v3H8zM2 19h18v4H2z" fill="#ddd" /><path d="M18 18h4v3" stroke="#999" /></Icon>
        </button>
      </div>
      <PanelEnd label="Nascondi a destra" d="M2 2l4 4-4 4" />
    </div>
  );
}

export default function App() {
  return (
    <div className="flex h-screen min-h-[800px] flex-col bg-black font-['Noto_Sans',sans-serif] text-[23px] leading-[28px] text-black">
      <div className="mx-[2px] mt-[2px] mb-[2px] flex min-h-0 flex-1 flex-col border-r-[3px] border-b-[3px] border-l-2 border-r-[#b5b5b5] border-b-[#7d9fcf] border-l-[#7d9fcf]">
        <TitleBar />
        <div className="flex min-h-0 flex-1 flex-col border border-black bg-[#edebea]">
          <MenuBar />
          <FileToolbar />
          <PropertyToolbar />
          <div className="flex min-h-0 flex-1">
            <Palette />
            <div className="flex min-w-0 flex-1 flex-col">
              <div className="flex min-h-0 flex-1">
                <CanvasPane />
                <Docks />
              </div>
              <div className="pt-px"><HandleFlat /></div>
              <DockTitle>Riga di comando</DockTitle>
              <textarea aria-label="Storico comandi" readOnly className="block h-[77px] w-full resize-none border border-[#9d9a97] bg-white outline-none" />
              <div className="flex items-center gap-[10px] pt-[6px] pr-[3px] pb-[3px]">
                <label htmlFor="cmd" className="whitespace-nowrap">Prossimo punto o [chiudi/annulla]</label>
                <input id="cmd" className="h-8 min-w-0 flex-1 bg-white px-1 outline-none" />
              </div>
            </div>
          </div>
          <StatusBar />
        </div>
      </div>
      <Panel />
    </div>
  );
}
